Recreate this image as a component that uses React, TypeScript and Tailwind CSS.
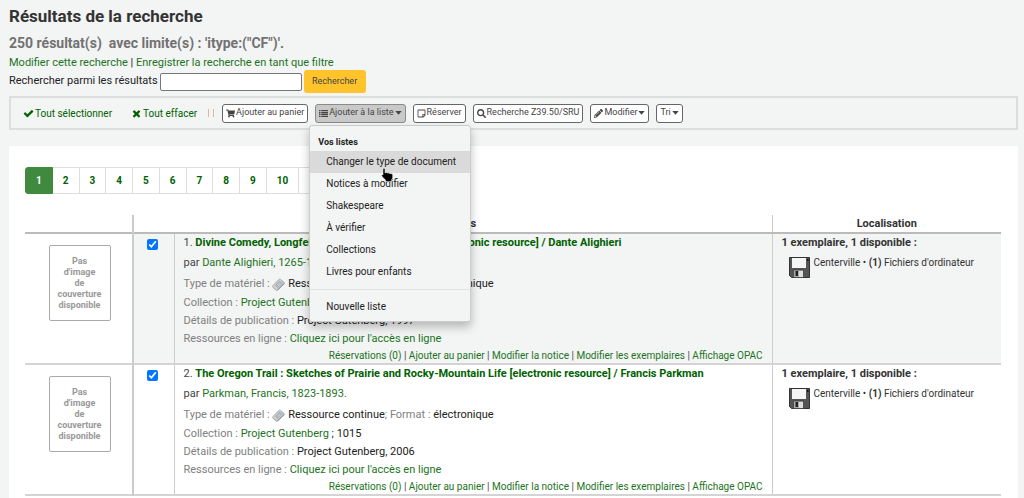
import type { ReactNode } from "react";
import { FaPencilAlt, FaRegStickyNote, FaSearch, FaShoppingCart } from "react-icons/fa";

interface Result {
    id: number;
    title: string;
    author: string;
    number?: string;
    year: string;
}

interface ToolButtonProps {
    icon?: ReactNode;
    label: string;
    caret?: boolean;
    active?: boolean;
}

const results: Result[] = [
    {
        id: 1,
        title: "Divine Comedy, Longfellow's Translation, Inferno [electronic resource] / Dante Alighieri",
        author: "Dante Alighieri, 1265-1321.",
        year: "1997",
    },
    {
        id: 2,
        title: "The Oregon Trail : Sketches of Prairie and Rocky-Mountain Life [electronic resource] / Francis Parkman",
        author: "Parkman, Francis, 1823-1893.",
        number: "1015",
        year: "2006",
    },
];

const lists = [
    "Changer le type de document",
    "Notices à modifier",
    "Shakespeare",
    "À vérifier",
    "Collections",
    "Livres pour enfants",
];

const actions = [
    "Réservations (0)",
    "Ajouter au panier",
    "Modifier la notice",
    "Modifier les exemplaires",
    "Affichage OPAC",
];

const pages = ["1", "2", "3", "4", "5", "6", "7", "8", "9", "10", "Suivant", "Dernier"];

const CheckIcon = () => (
    <svg viewBox="0 0 1792 1792" className="h-[11px] w-[11px]" fill="currentColor">
        <path d="M1671 566q0 40-28 68l-724 724-136 136q-28 28-68 28t-68-28l-136-136-362-362q-28-28-28-68t28-68l136-136q28-28 68-28t68 28l294 295 656-657q28-28 68-28t68 28l136 136q28 28 28 68z" />
    </svg>
);

const CrossIcon = () => (
    <svg viewBox="0 0 1792 1792" className="h-[11px] w-[11px]" fill="currentColor">
        <path d="M1490 1322q0 40-28 68l-136 136q-28 28-68 28t-68-28l-294-294-294 294q-28 28-68 28t-68-28l-136-136q-28-28-28-68t28-68l294-294-294-294q-28-28-28-68t28-68l136-136q28-28 68-28t68 28l294 294 294-294q28-28 68-28t68 28l136 136q28 28 28 68t-28 68l-294 294 294 294q28 28 28 68z" />
    </svg>
);

const ListIcon = () => (
    <svg viewBox="0 0 18 14" className="h-[7px] w-[9px]" fill="currentColor">
        <path d="M0 0h3v2.600H0zM4.500 0H18v2.600H4.500zM0 3.800h3v2.600H0zM4.500 3.800H18v2.600H4.500zM0 7.600h3v2.600H0zM4.500 7.600H18v2.600H4.500zM0 11.400h3V14H0zM4.500 11.400H18V14H4.500z" />
    </svg>
);

const CaretIcon = () => (
    <svg viewBox="0 0 7 4" className="h-1 w-[7px]" fill="currentColor">
        <path d="M.3 0h6.400L3.500 3.700z" />
    </svg>
);

const MaterialIcon = () => (
    <svg viewBox="0 0 26 26" className="inline h-[13px] w-[13px] align-middle">
        <path d="M2 15 13 3.500q2-2 4-.5l7 5.500q1.500 1.500 0 3.500L12 23.500q-2 2-4 .5L2 19q-1.500-2 0-4z" fill="#cfd1d1" stroke="#8d9090" strokeWidth="1.300" />
        <path d="m7 15 8-8.500 5 4-8 8.500z" fill="#aeb2b4" stroke="#8a8e90" strokeWidth="1" />
        <path d="m10 15 6-6M12 17l6-6" stroke="#eef0f0" strokeWidth="1.200" />
        <path d="M18 7.500h3v3h-3z" fill="#8fc0e6" />
        <path d="M11 24 24 11" stroke="#777b7c" strokeWidth="1.500" />
    </svg>
);

const FloppyIcon = () => (
    <svg viewBox="0 0 21 21" className="h-[21px] w-[21px] shrink-0">
        <path d="M.5.5h20v20h-18l-2-2z" fill="#555" stroke="#333" />
        <path d="M3 1h14v10H3z" fill="#f5f5f5" />
        <path d="M18 2h1.500v2H18z" fill="#111" />
        <path d="M4.500 13h10v7.500h-10z" fill="#aaa" stroke="#333" strokeWidth=".6" />
        <path d="M6.500 14h2.500v5H6.500z" fill="#222" />
        <path d="M10 14h4v6h-4z" fill="#ddd" />
    </svg>
);

const HandCursor = () => (
    <svg viewBox="0 0 13 14" className="absolute left-[71px] top-[42px] h-[14px] w-[13px]">
        <path d="M2 .5q1.500-.8 2 .7V5l1-.5q1-.3 1.500.6.9-.7 1.700.3.900-.6 1.700.3 1.600-.3 1.800 1V10l-1 1.500V13.500H4.500V12L1.500 9 .5 7.500Q1 6.300 2 7z" fill="#000" stroke="#fff" strokeWidth=".5" />
    </svg>
);

const ToolButton = ({ icon, label, caret, active }: ToolButtonProps) => (
    <button
        type="button"
        className={`flex h-[19px] items-center gap-px whitespace-nowrap rounded-[3px] border px-[3px] text-[9px] text-[#444] ${active ? "border-[#8a8a8a] bg-[#c9c9c9]" : "border-[#666] bg-white"}`}
    >
        {icon}
        {label}
        {caret ? <CaretIcon /> : null}
    </button>
);

const ListMenu = () => (
    <div className="absolute left-[-6px] top-[21px] z-10 w-[162px] rounded-[3px] border border-[#ccc] bg-[#f3f4f4] pb-[3px] pt-2 text-[10px] whitespace-nowrap text-[#222] shadow-[0_5px_10px_rgba(0,0,0,0.25)]">
        <p className="px-2 pb-px text-[9px] leading-4 font-bold">Vos listes</p>
        {lists.map((list, index) => (
            <a key={list} href="#" className={`block px-4 leading-[22px] ${index === 0 ? "bg-[#dadada]" : ""}`}>
                {list}
            </a>
        ))}
        <hr className="my-[6px] border-[#e0e3e3]" />
        <a href="#" className="block px-4 leading-[22px]">Nouvelle liste</a>
        <HandCursor />
    </div>
);

const ResultRow = ({ result, shaded }: { result: Result; shaded: boolean }) => {
    const tint = shaded ? "bg-[#f3f4f4]" : "bg-white";
    return (
        <tr className="border-b-2 border-[#d4d4d4] align-top">
            <td className="border-r-2 border-[#ccc] pl-[2px] pt-[11px]">
                <div className="mx-auto flex h-[76px] w-[62px] items-center justify-center rounded-[2px] border border-[#aaa] text-center text-[9px] leading-[11px] font-bold text-[#999]">
                    <span>Pas<br />d'image<br />de<br />couverture<br />disponible</span>
                </div>
            </td>
            <td className={`border-r border-[#ccc] pr-[2px] pt-[5px] ${tint}`}>
                <input type="checkbox" defaultChecked aria-label={result.title} className="mx-auto block h-[11px] w-[11px]" />
            </td>
            <td className={`border-r border-[#ccc] pl-[9px] pr-[9px] text-[11px] leading-[18px] text-[#808080] ${tint}`}>
                <p className="leading-[17px] text-[#444]">
                    {result.id}. <a href="#" className="font-bold text-[#006100]">{result.title}</a>
                </p>
                <p className="pt-[3px] text-[#444]">par <a href="#" className="text-[#1c731c]">{result.author}</a></p>
                <p className="pt-[3px]">
                    Type de matériel : <MaterialIcon /> <span className="text-[#222]">Ressource continue</span>; Format : <span className="text-[#222]">électronique</span>
                </p>
                <p className="pt-px">
                    Collection : <a href="#" className="text-[#1c731c]">Project Gutenberg</a>
                    {result.number ? <span className="text-[#222]"> ; {result.number}</span> : null}
                </p>
                <p>Détails de publication : <span className="text-[#222]">Project Gutenberg, {result.year}</span></p>
                <p>Ressources en ligne : <a href="#" className="text-[#1c731c]">Cliquez ici pour l'accès en ligne</a></p>
                <p className="text-right text-[10px] leading-[15px] text-[#444]">
                    {actions.map((action, index) => (
                        <span key={action}>
                            {index > 0 ? " | " : ""}
                            <a href="#" className="text-[#1c731c]">{action}</a>
                        </span>
                    ))}
                </p>
            </td>
            <td className={`pl-[9px] text-[#333] ${tint}`}>
                <p className="text-[11px] leading-[17px] font-bold">1 exemplaire, 1 disponible :</p>
                <div className="flex gap-1 pl-[7px] pt-[6px]">
                    <FloppyIcon />
                    <p className="text-[10px] leading-3">Centerville • <b>(1)</b> Fichiers d'ordinateur</p>
                </div>
            </td>
        </tr>
    );
};

const App = () => {
    return (
        <div className="h-screen overflow-hidden bg-[#f3f4f4] pl-[9px] pr-[6px] pt-[5px] font-[Roboto,sans-serif] text-[11px] text-[#222]">
            <h1 className="text-[17px] leading-[22px] font-bold text-[#333]">Résultats de la recherche</h1>
            <p className="pt-[7px] text-[14px] leading-[18px] font-bold whitespace-pre text-[#727272]">250 résultat(s)  avec limite(s) : 'itype:("CF")'.</p>
            <p className="pt-1 leading-[14px]">
                <a href="#" className="text-[#1c731c]">Modifier cette recherche</a> | <a href="#" className="text-[#1c731c]">Enregistrer la recherche en tant que filtre</a>
            </p>
            <form className="flex items-center">
                <label htmlFor="within">Rechercher parmi les résultats</label>
                <input id="within" type="text" className="ml-[2px] h-[18px] w-[142px] rounded-[2px] border border-[#777] bg-white px-1" />
                <button type="button" className="ml-[2px] h-[23px] w-[62px] rounded-[3px] bg-[#ffc32b] text-[9px] text-[#444]">Rechercher</button>
            </form>

            <div className="mt-[3px] flex h-[34px] items-center border-2 border-[#dcdede] pl-[12px]">
                <a href="#" className="flex items-center gap-px text-[10px] text-[#006100]"><CheckIcon />Tout sélectionner</a>
                <a href="#" className="ml-[19px] flex items-center gap-px text-[10px] text-[#006100]"><CrossIcon />Tout effacer</a>
                <span className="ml-[11px] mr-[8px] flex gap-1">
                    <i className="h-2 w-px bg-[#d8b9a0]" />
                    <i className="h-2 w-px bg-[#d8b9a0]" />
                </span>
                <div className="flex gap-[7px]">
                    <ToolButton icon={<FaShoppingCart />} label="Ajouter au panier" />
                    <div className="relative">
                        <ToolButton icon={<ListIcon />} label="Ajouter à la liste" caret active />
                        <ListMenu />
                    </div>
                    <ToolButton icon={<FaRegStickyNote />} label="Réserver" />
                    <ToolButton icon={<FaSearch />} label="Recherche Z39.50/SRU" />
                    <ToolButton icon={<FaPencilAlt />} label="Modifier" caret />
                    <ToolButton label="Tri" caret />
                </div>
            </div>

            <main className="mt-[16px] h-full bg-white pl-[16px] pr-[17px] pt-[21px]">
                <nav className="flex text-[10px] font-bold">
                    {pages.map((page, index) => (
                        <a
                            key={page}
                            href="#"
                            className={`flex h-[27px] items-center border-y border-r px-[10px] ${index === 0 ? "rounded-l-[3px] border-l border-[#3f8a3f] bg-[#3f8a3f] text-white" : "border-[#ddd] text-[#006100]"}`}
                        >
                            {page}
                        </a>
                    ))}
                </nav>
                <table className="mt-[21px] w-full table-fixed border-collapse">
                    <colgroup>
                        <col className="w-[108px]" />
                        <col className="w-[41px]" />
                        <col />
                        <col className="w-[229px]" />
                    </colgroup>
                    <thead>
                        <tr className="h-[18px] border-b-2 border-[#bbb] text-[11px] leading-4 text-[#333]">
                            <th className="border-r-2 border-[#ccc]" />
                            <th colSpan={2} className="border-r border-[#ccc]">Résultats</th>
                            <th>Localisation</th>
                        </tr>
                    </thead>
                    <tbody>
                        {results.map((result, index) => (
                            <ResultRow key={result.id} result={result} shaded={index % 2 === 0} />
                        ))}
                    </tbody>
                </table>
            </main>
        </div>
    );
};

export default App;
